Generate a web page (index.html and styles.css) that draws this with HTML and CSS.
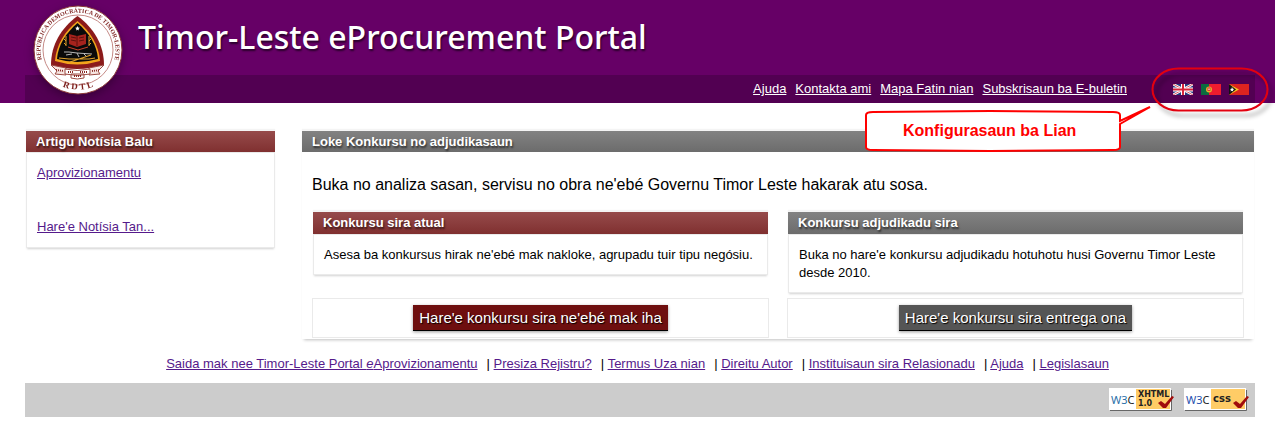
FILE: index.html
```html
<!DOCTYPE html>
<html lang="tet">
  <head>
    <meta charset="UTF-8" />
    <meta name="viewport" content="width=device-width, initial-scale=1.0" />
    <title>Timor-Leste eProcurement Portal</title>
    <link rel="stylesheet" href="styles.css">
  </head>
  <body>
    <header class="header">
      <div class="wrap header-inner">
        <a href="#" class="logo" aria-label="RDTL">
          <svg width="94" height="94" viewBox="0 0 94 94">
            <defs>
              <path id="sealTop" d="M14 65 A37.500 37.500 0 1 1 80 65" />
              <path id="sealBottom" d="M25 80 A40 40 0 0 0 69 80" />
            </defs>
            <circle cx="47" cy="47" r="44" fill="#fff" stroke="#8c3a36" stroke-width="1" />
            <circle cx="47" cy="47" r="35" fill="none" stroke="#c58a86" stroke-width="1" />
            <text class="seal-text"><textPath href="#sealTop" startOffset="50%" text-anchor="middle">REPÚBLICA DEMOCRÁTICA DE TIMOR-LESTE</textPath></text>
            <text class="seal-rdtl"><textPath href="#sealBottom" startOffset="50%" text-anchor="middle">R D T L</textPath></text>
            <path d="M46.500 13 C30 25 20 42 20 62 Q46 70 73 62 C73 42 63 25 46.500 13Z" fill="#8b1a1a" />
            <path d="M46.500 18 C34 28 25 42 24 58 Q46 65 69 58 C68 42 59 28 46.500 18Z" fill="#f2a51c" />
            <path d="M46.500 20 C35 30 27 42 26 56 Q46 62 67 56 C66 42 58 30 46.500 20Z" fill="#0a0a0a" />
            <path d="M46.500 23l.7 1.500 1.600.3-1.200 1.100.3 1.600-1.400-.8-1.400.8.3-1.600-1.200-1.100 1.600-.3z" fill="#fff" />
            <path d="M38 31l8 2 9-2v10l-9 3-8-3z" fill="#a5231d" />
            <path d="M46 33v10M40 34l5 1M40 37l5 1M48 35l5-1M48 38l5-1" stroke="#5a0f0c" fill="none" />
            <path d="M35 33v10M33 36l2 2M33 40l2 2M58 33v10M60 36l-2 2M60 40l-2 2" stroke="#e0a12c" fill="none" />
            <path d="M37 44l10 3 10-3" stroke="#c7402a" fill="none" />
            <path d="M33 49h5l8 1 15 1M35 52l6-1M46 50l2 4M53 51l3 3" stroke="#b8b8b8" fill="none" stroke-width="1" />
            <path d="M28 55l10 1 20 0 6-1M39 59l21-7" stroke="#e0a12c" fill="none" stroke-width="1.200" />
            <path d="M20 62l15 3v7l-11-1 2-3zM73 62l-15 3v7l11-1-2-3z" fill="#f7e5e0" stroke="#9c4a43" />
            <path d="M34 66q12 3 25 0v5q-12 3-25 0zM40 71h13v4q-7 2-13 0z" fill="#fff" stroke="#9c4a43" />
            <path d="M25 67l8 1M61 68l8-1M37 69h6M49 69h7M43 73h7" stroke="#8b2a25" stroke-width="2" stroke-dasharray="1 1" />
          </svg>
        </a>
        <h1 class="site-title">Timor-Leste eProcurement Portal</h1>
        <div class="topbar">
          <nav class="topnav">
            <a href="#">Ajuda</a>
            <a href="#">Kontakta ami</a>
            <a href="#">Mapa Fatin nian</a>
            <a href="#">Subskrisaun ba E-buletin</a>
          </nav>
          <div class="languages">
            <a href="#" aria-label="English">
              <svg width="20" height="11" viewBox="0 0 20 11">
                <rect width="20" height="11" fill="#263a7e" />
                <path d="M0 0l20 11M20 0L0 11" stroke="#fff" stroke-width="2.500" />
                <path d="M0 0l20 11M20 0L0 11" stroke="#d22a3b" stroke-width=".8" />
                <path d="M10 0v11M0 5.500h20" stroke="#fff" stroke-width="4" />
                <path d="M10 0v11M0 5.500h20" stroke="#d8243a" stroke-width="2" />
              </svg>
            </a>
            <a href="#" aria-label="Português">
              <svg width="20" height="11" viewBox="0 0 20 11">
                <rect width="20" height="11" fill="#ee1c2e" />
                <rect width="8" height="11" fill="#0b6b3f" />
                <circle cx="8" cy="5.500" r="3" fill="#e0b52c" />
                <rect x="6.500" y="3.500" width="3" height="3.500" fill="#d63a3a" />
                <rect x="7.500" y="4.500" width="1" height="1.500" fill="#fff" />
              </svg>
            </a>
            <a href="#" aria-label="Tetum">
              <svg width="20" height="11" viewBox="0 0 20 11">
                <rect width="20" height="11" fill="#dc241f" />
                <path d="M0 0l10 5.500L0 11z" fill="#f8c320" />
                <path d="M0 0l7 5.500L0 11z" fill="#111" />
                <path d="M1 5l1.500-.3L3 3l.8 1.700L5.300 5 4 6l.2 1.600L2.800 6.800 1.500 7.500 2 6z" fill="#fff" />
              </svg>
            </a>
          </div>
        </div>
        <div class="callout">
          <svg class="callout-shape" width="415" height="100" viewBox="0 0 415 100">
            <rect class="ring" x="292.500" y="8.500" width="115" height="42" rx="26" ry="21" />
            <path class="bubble" d="M13 52 Q6 52 6 55 V87 Q6 90 13 90 L130 91 L253 90 Q260 90 260 87 V64 L290 47 L260 61 V55 Q260 52 253 52 L130 51Z" />
          </svg>
          <span class="callout-text">Konfigurasaun ba Lian</span>
        </div>
      </div>
    </header>

    <div class="wrap content">
      <aside class="sidebar">
        <h2 class="heading heading-red">Artigu Notísia Balu</h2>
        <div class="box news">
          <a href="#">Aprovizionamentu</a>
          <a href="#">Hare'e Notísia Tan...</a>
        </div>
      </aside>

      <main class="main">
        <h2 class="heading heading-gray">Loke Konkursu no adjudikasaun</h2>
        <p class="intro">Buka no analiza sasan, servisu no obra ne'ebé Governu Timor Leste hakarak atu sosa.</p>
        <div class="tenders">
          <section class="card">
            <h3 class="heading heading-red">Konkursu sira atual</h3>
            <p class="box">Asesa ba konkursus hirak ne'ebé mak nakloke, agrupadu tuir tipu negósiu.</p>
          </section>
          <section class="card">
            <h3 class="heading heading-gray">Konkursu adjudikadu sira</h3>
            <p class="box">Buka no hare'e konkursu adjudikadu hotuhotu husi Governu Timor Leste desde 2010.</p>
          </section>
          <div class="action"><button type="button" class="btn btn-red">Hare'e konkursu sira ne'ebé mak iha</button></div>
          <div class="action"><button type="button" class="btn btn-gray">Hare'e konkursu sira entrega ona</button></div>
        </div>
      </main>
    </div>

    <footer>
      <ul class="footer-links">
        <li><a href="#">Saida mak nee Timor-Leste Portal <em>e</em>Aprovizionamentu</a></li>
        <li><a href="#">Presiza Rejistru?</a></li>
        <li><a href="#">Termus Uza nian</a></li>
        <li><a href="#">Direitu Autor</a></li>
        <li><a href="#">Instituisaun sira Relasionadu</a></li>
        <li><a href="#">Ajuda</a></li>
        <li><a href="#">Legislasaun</a></li>
      </ul>
      <div class="wrap badges">
        <a href="#" aria-label="W3C XHTML 1.0">
          <svg width="66" height="24" viewBox="0 0 66 24">
            <path d="M1 22.500h61.500V2" fill="none" stroke="#666" />
            <rect width="62" height="22" fill="#fff" />
            <rect x="27" y="1" width="34" height="20" fill="#fc6" />
            <text x="2" y="16" class="w3"><tspan fill="#2a6fa8">W3</tspan><tspan fill="#222">C</tspan></text>
            <text x="29" y="9" class="spec">XHTML</text>
            <text x="29" y="18" class="spec">1.0</text>
            <path d="M49 15l3-2 4 3 7-8 2 1-8 11h-3z" fill="#a00c0c" />
          </svg>
        </a>
        <a href="#" aria-label="W3C CSS">
          <svg width="66" height="24" viewBox="0 0 66 24">
            <path d="M1 22.500h61.500V2" fill="none" stroke="#666" />
            <rect width="62" height="22" fill="#fff" />
            <rect x="27" y="1" width="34" height="20" fill="#fc6" />
            <text x="2" y="16" class="w3"><tspan fill="#1f4fae">W3</tspan><tspan fill="#222">C</tspan></text>
            <text x="29" y="14" class="spec spec-css">css</text>
            <path d="M49 15l3-2 4 3 7-8 2 1-8 11h-3z" fill="#a00c0c" />
          </svg>
        </a>
      </div>
    </footer>
  </body>
</html>
```
FILE: styles.css
```css
:root {
  --purple: #660066;
  --purple-dark: #520052;
  --link: #551a8b;
  --line: #eaeaea;
}
* {
  box-sizing: border-box;
}
body {
  margin: 0;
  background: #fff;
  color: #000;
  font-family: "Liberation Sans", Arial, sans-serif;
  font-size: 13px;
  line-height: 18px;
}
h1,
h2,
h3,
p,
ul {
  margin: 0;
  padding: 0;
}
a {
  color: var(--link);
}
.wrap {
  margin: 0 20px 0 25px;
}

/* header */
.header {
  background: var(--purple);
}
.header-inner {
  position: relative;
}
.logo {
  position: absolute;
  left: 6px;
  top: 3px;
}
.logo svg {
  display: block;
  filter: drop-shadow(0 3px 5px rgba(0, 0, 0, 0.3));
}
.seal-text {
  font: bold 6px "Liberation Serif", serif;
  fill: #7c1f1c;
}
.seal-rdtl {
  font: bold 9px "Liberation Serif", serif;
  fill: #7c1f1c;
}
.site-title {
  padding: 17px 0 18px 113px;
  color: #fff;
  font: 500 32px/40px "Noto Sans", "Open Sans", sans-serif;
  text-shadow: 1px 2px 2px rgba(0, 0, 0, 0.6);
}
.topbar {
  display: flex;
  justify-content: flex-end;
  align-items: center;
  gap: 46px;
  padding: 5px 6px;
  background: var(--purple-dark);
}
.topnav {
  display: flex;
  gap: 9px;
}
.topnav a {
  color: #fff;
}
.languages {
  display: flex;
  gap: 8px;
}
.languages svg {
  display: block;
}

/* language callout */
.callout {
  position: absolute;
  top: 60px;
  right: -20px;
  width: 415px;
  height: 100px;
  pointer-events: none;
}
.callout-shape {
  position: absolute;
  left: 0;
  top: 0;
}
.ring {
  fill: none;
  stroke: #e3000f;
  stroke-width: 2;
  filter: drop-shadow(4px 5px 2px rgba(0, 0, 0, 0.35));
}
.bubble {
  fill: #fff;
  stroke: #f00;
  stroke-width: 2;
}
.callout-text {
  position: absolute;
  left: 43px;
  top: 61px;
  color: #f00;
  font-size: 16px;
  font-weight: bold;
  line-height: 20px;
}

/* content */
.content {
  display: grid;
  grid-template-columns: 249px 1fr;
  gap: 27px;
  align-items: start;
  padding: 28px 1px 0;
}
.heading {
  padding: 2px 10px;
  color: #fff;
  font-size: 13px;
  line-height: 18px;
  text-shadow: 1px 2px 2px rgba(0, 0, 0, 0.6);
  box-shadow: 0 -2px 1px #f4f4f4;
}
h2.heading {
  padding-bottom: 1px;
}
.heading-red {
  background: linear-gradient(#964b4b, #803030);
}
.heading-gray {
  background: linear-gradient(#828282, #6c6c6c);
}
.box {
  padding: 11px 10px;
  border: 1px solid var(--line);
  box-shadow: 0 2px 2px -1px rgba(0, 0, 0, 0.18);
}
.news {
  display: flex;
  flex-direction: column;
  align-items: flex-start;
  gap: 36px;
}
.main {
  box-shadow: 0 3px 3px -2px rgba(0, 0, 0, 0.25);
}
.intro {
  padding: 23px 10px 17px;
  font-size: 16px;
  line-height: 20px;
}
.tenders {
  display: grid;
  grid-template-columns: 1fr 1fr;
  gap: 5px 18px;
  align-items: start;
  padding: 0 10px 1px;
}
.card {
  margin: 0 1px;
}
.card .box {
  padding-bottom: 10px;
}
.action {
  padding: 6px;
  border: 1px solid var(--line);
  text-align: center;
}
.btn {
  display: inline-block;
  padding: 3px 6px;
  border: 0;
  border-bottom: 1px solid #000;
  color: #fff;
  font-family: inherit;
  font-size: 15px;
  line-height: 19px;
  vertical-align: top;
  cursor: pointer;
  text-shadow: 1px 1px 1px #000;
  box-shadow: 0 1px 3px rgba(0, 0, 0, 0.4);
}
.btn-red {
  background: #6e0f0f;
}
.btn-gray {
  background: #555;
}

/* footer */
.footer-links {
  display: flex;
  justify-content: center;
  padding: 16px 0 10px;
  list-style: none;
}
.footer-links li + li {
  margin-left: 9px;
}
.footer-links li + li::before {
  content: "| ";
}
.badges {
  display: flex;
  justify-content: flex-end;
  gap: 9px;
  padding: 5px;
  background: #ccc;
}
.badges svg {
  display: block;
}
.w3 {
  font: 11px "Noto Sans", sans-serif;
}
.spec {
  font: bold 8px "DejaVu Sans", sans-serif;
  fill: #222;
}
.spec-css {
  font-size: 10px;
}
```
